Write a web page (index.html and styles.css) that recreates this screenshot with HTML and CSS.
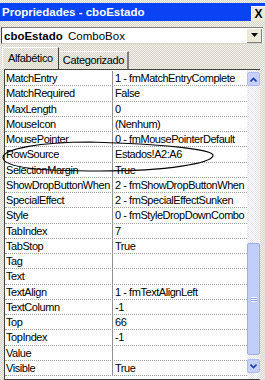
FILE: index.html
```html
<!DOCTYPE html>
<html>
<head>
    <title>Propriedades - cboEstado</title>
    <link rel="stylesheet" href="styles.css">
</head>
<body>
    <div class="window">
        <div class="titlebar">
            <span class="title">Propriedades - cboEstado</span>
            <span class="close">X</span>
        </div>

        <div class="combo">
            <span class="combo-text"><b>cboEstado</b> ComboBox</span>
            <span class="combo-btn">
                <svg width="7" height="4" viewBox="0 0 7 4"><path d="M0 0h7L3.5 4z" fill="#000"/></svg>
            </span>
        </div>

        <div class="tabs">
            <span class="tab active">Alfabético</span>
            <span class="tab">Categorizado</span>
        </div>

        <div class="grid-box">
            <div class="props">
                <div class="row"><span class="name">MatchEntry</span><span class="value">1 - fmMatchEntryComplete</span></div>
                <div class="row"><span class="name">MatchRequired</span><span class="value">False</span></div>
                <div class="row"><span class="name">MaxLength</span><span class="value">0</span></div>
                <div class="row"><span class="name">MouseIcon</span><span class="value">(Nenhum)</span></div>
                <div class="row"><span class="name">MousePointer</span><span class="value">0 - fmMousePointerDefault</span></div>
                <div class="row"><span class="name">RowSource</span><span class="value">Estados!A2:A6</span></div>
                <div class="row"><span class="name">SelectionMargin</span><span class="value">True</span></div>
                <div class="row"><span class="name">ShowDropButtonWhen</span><span class="value">2 - fmShowDropButtonWhen</span></div>
                <div class="row"><span class="name">SpecialEffect</span><span class="value">2 - fmSpecialEffectSunken</span></div>
                <div class="row"><span class="name">Style</span><span class="value">0 - fmStyleDropDownCombo</span></div>
                <div class="row"><span class="name">TabIndex</span><span class="value">7</span></div>
                <div class="row"><span class="name">TabStop</span><span class="value">True</span></div>
                <div class="row"><span class="name">Tag</span><span class="value"></span></div>
                <div class="row"><span class="name">Text</span><span class="value"></span></div>
                <div class="row"><span class="name">TextAlign</span><span class="value">1 - fmTextAlignLeft</span></div>
                <div class="row"><span class="name">TextColumn</span><span class="value">-1</span></div>
                <div class="row"><span class="name">Top</span><span class="value">66</span></div>
                <div class="row"><span class="name">TopIndex</span><span class="value">-1</span></div>
                <div class="row"><span class="name">Value</span><span class="value"></span></div>
                <div class="row"><span class="name">Visible</span><span class="value">True</span></div>
            </div>

            <div class="scrollbar">
                <span class="sb-btn">
                    <svg width="7" height="5" viewBox="0 0 7 5"><path d="M0.5 4.5L3.5 1.5L6.5 4.5" fill="none" stroke="#1c3cb4" stroke-width="1.6"/></svg>
                </span>
                <span class="sb-track"></span>
                <span class="sb-thumb">
                    <span class="grip"></span>
                </span>
                <span class="sb-btn">
                    <svg width="7" height="5" viewBox="0 0 7 5"><path d="M0.5 0.5L3.5 3.5L6.5 0.5" fill="none" stroke="#1c3cb4" stroke-width="1.6"/></svg>
                </span>
            </div>
        </div>

        <!-- hand-drawn circle around RowSource -->
        <svg class="mark" width="265" height="380" viewBox="0 0 265 380">
            <path d="M3 158C2 149 40 142 90 142C160 144 216 149 213 156C210 163 170 171 100 171C40 171 5 168 3 158" fill="none" stroke="#000" stroke-width="1.1"/>
        </svg>
    </div>
</body>
</html>
```

FILE: styles.css
```css
body {
    margin: 0;
    width: 265px;
    height: 380px;
    overflow: hidden;
    font-family: "Liberation Sans", Arial, sans-serif;
    font-size: 11px;
    color: #000;
    background-color: #e4e2da;
    background-image: repeating-conic-gradient(#d6d3c9 0 25%, #f2f1ec 0 50%);
    background-size: 2px 2px;
}
.window {
    position: relative;
    height: 380px;
    padding-top: 3px;
    box-sizing: border-box;
}
.titlebar {
    display: flex;
    align-items: center;
    justify-content: space-between;
    height: 18px;
    background: #0a44f2;
}
.title {
    padding-left: 2px;
    color: #fff;
    font-weight: bold;
    font-size: 11.5px;
}
.close {
    display: flex;
    align-items: center;
    justify-content: center;
    width: 13px;
    height: 14px;
    margin-top: 2px;
    background: #ece9d8;
    border-left: 1px solid #fff;
    border-top: 1px solid #fff;
    font-weight: bold;
    font-size: 12px;
}
.combo {
    display: flex;
    align-items: center;
    justify-content: space-between;
    height: 15px;
    margin: 6px 2px 0 1px;
    background: #fff;
    border-left: 1px solid #404040;
    border-top: 1px solid #808080;
    border-bottom: 1px solid #d4d0c8;
}
.combo-text {
    padding-left: 2px;
    font-size: 11.5px;
}
.combo-text b {
    margin-right: 2px;
}
.combo-btn {
    display: flex;
    align-items: center;
    justify-content: center;
    width: 14px;
    height: 13px;
    margin-right: 1px;
    background: #ece9d8;
    border-right: 1px solid #808080;
    border-bottom: 1px solid #808080;
}
.tabs {
    display: flex;
    align-items: flex-end;
    height: 23px;
    margin-top: 2px;
    padding-left: 2px;
    letter-spacing: -0.35px;
}
.tab {
    height: 17px;
    line-height: 17px;
    padding: 0 3px 0 4px;
    border-right: 2px solid #808080;
    border-top: 1px solid #fff;
}
.tab.active {
    height: 21px;
    line-height: 21px;
    padding: 0 5px;
    border-left: 1px solid #fff;
    border-right: 1px solid #404040;
}
.grid-box {
    display: flex;
    height: 309px;
    margin-left: 4px;
    margin-right: 5px;
    background: #fff;
    border-top: 1px solid #404040;
    border-left: 1px solid #404040;
    border-bottom: 1px solid #404040;
}
.props {
    width: 242px;
    padding-top: 1px;
    letter-spacing: -0.45px;
}
.row {
    display: grid;
    grid-template-columns: 108px 1fr;
    height: 15.25px;
    line-height: 14px;
    border-bottom: 1px dotted #a0a0a0;
    box-sizing: border-box;
    white-space: nowrap;
    overflow: hidden;
}
.name {
    padding-left: 1px;
    border-right: 1px solid #909090;
    overflow: hidden;
}
.value {
    padding-left: 2px;
    overflow: hidden;
}
.scrollbar {
    display: flex;
    flex-direction: column;
    width: 13px;
    padding-top: 2px;
    background-image: repeating-conic-gradient(#e4e4f0 0 25%, #fff 0 50%);
    background-size: 2px 2px;
}
.sb-btn {
    display: flex;
    align-items: center;
    justify-content: center;
    height: 12px;
    background: #c6d0fa;
    border: 1px solid #b0bcf0;
    border-radius: 2px;
}
.sb-track {
    height: 157px;
}
.sb-thumb {
    display: flex;
    align-items: center;
    justify-content: center;
    height: 110px;
    margin-bottom: 4px;
    background: #c2cefa;
    border: 1px solid #a0acea;
    border-radius: 2px;
}
.grip {
    width: 6px;
    height: 5px;
    background: repeating-linear-gradient(#fff 0 1px, #8ca0e8 1px 2px);
}
.mark {
    position: absolute;
    left: 0;
    top: 0;
    pointer-events: none;
}
```
